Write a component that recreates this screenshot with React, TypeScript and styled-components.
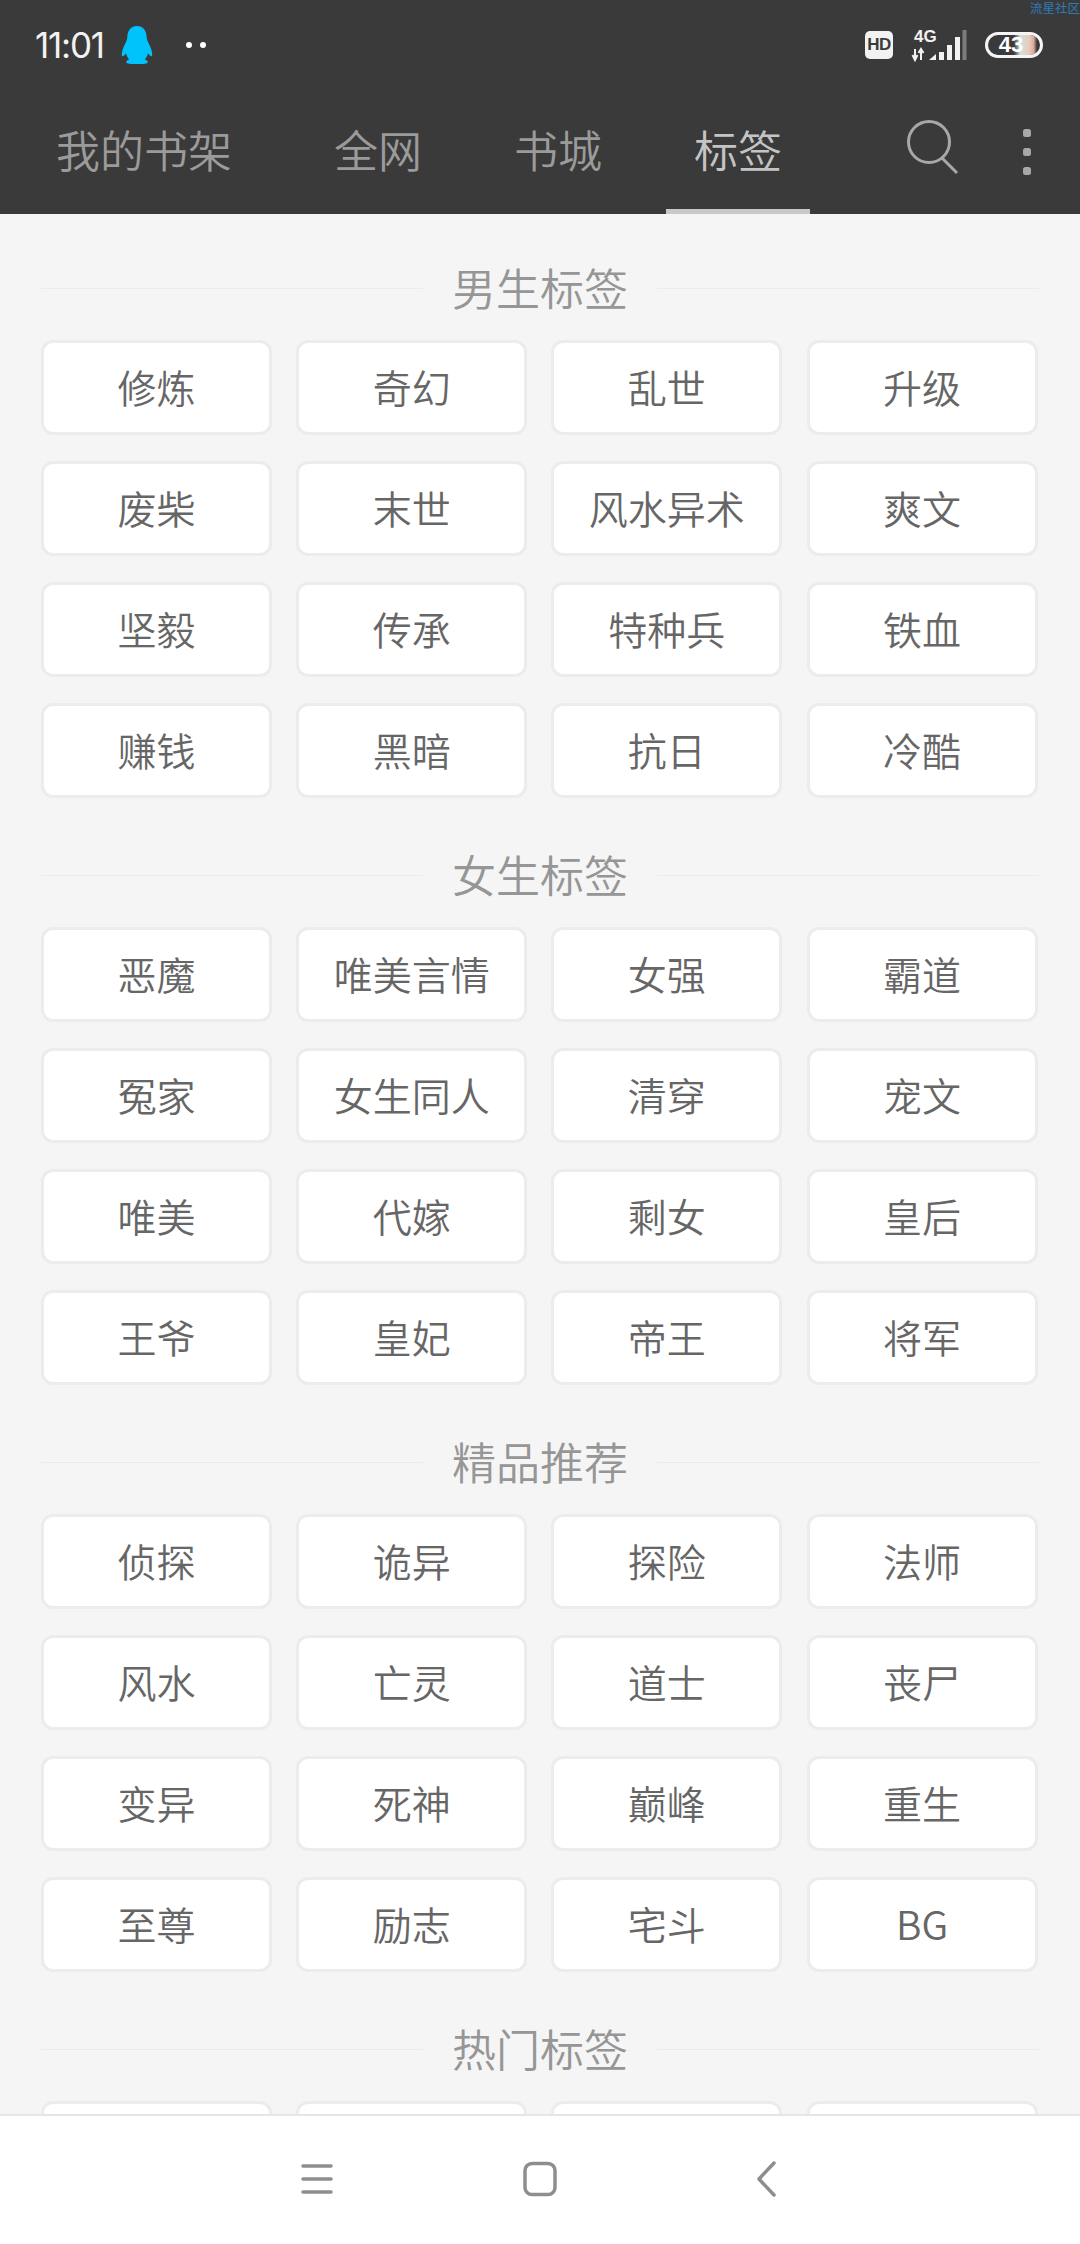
import React from "react";
import styled, { createGlobalStyle } from "styled-components";

const Global = createGlobalStyle`
  html, body { margin: 0; padding: 0; background: #f5f5f5; }
  body { font-family: "Noto Sans CJK SC", "Noto Sans", sans-serif; }
`;

const Screen = styled.div`
  width: 1080px;
  height: 2244px;
  display: flex;
  flex-direction: column;
  overflow: hidden;
  background: #f5f5f5;
`;

const Header = styled.header`
  flex: none;
  height: 214px;
  background: #3a3a3a;
  position: relative;
  display: flex;
  flex-direction: column;
`;

const Watermark = styled.span`
  position: absolute;
  top: 0;
  right: 0;
  font-size: 12.5px;
  line-height: 15px;
  color: #2f7ab8;
`;

const StatusBar = styled.div`
  flex: none;
  height: 90px;
  display: flex;
  align-items: center;
  padding: 0 37px 0 35px;
`;

const Time = styled.span`
  font-family: Inter, "Open Sans", sans-serif;
  font-size: 35px;
  line-height: 44px;
  letter-spacing: -1.2px;
  color: #f2f2f2;
`;

const Penguin = styled.svg`
  flex: none;
  width: 32px;
  height: 38px;
  margin-left: 17px;
`;

const StatusDots = styled.div`
  display: flex;
  gap: 8px;
  margin-left: 33px;
`;

const StatusDot = styled.i`
  width: 6px;
  height: 6px;
  border-radius: 50%;
  background: #fff;
`;

const StatusRight = styled.div`
  margin-left: auto;
  display: flex;
  align-items: center;
`;

const HdBadge = styled.span`
  width: 28px;
  height: 28px;
  border-radius: 5px;
  background: #f2f2f2;
  color: #3a3a3a;
  font-family: "Liberation Sans", sans-serif;
  font-weight: 700;
  font-size: 17px;
  letter-spacing: -0.5px;
  display: flex;
  align-items: center;
  justify-content: center;
`;

const Signal = styled.svg`
  width: 60px;
  height: 34px;
  margin-left: 18px;
`;

const Battery = styled.span`
  width: 58px;
  height: 26px;
  margin-left: 14px;
  box-sizing: border-box;
  border: 3px solid #f5f5f5;
  border-radius: 13px;
  background: linear-gradient(90deg, #3a3a3a 0 50%, #cfe3df 62%, #e8c9b8 80%, #d8a8a0 88%, #3a3a3a 94%);
  background-clip: padding-box;
  color: #fff;
  font-family: "Liberation Sans", sans-serif;
  font-weight: 700;
  font-size: 22px;
  line-height: 20px;
  text-align: center;
  padding-right: 6px;
`;

const Tabs = styled.nav`
  flex: 1;
  display: flex;
  align-items: stretch;
  gap: 36px;
  padding-left: 28px;
`;

const Tab = styled.div<{ $active?: boolean }>`
  flex: none;
  padding: 0 28px 1px;
  box-sizing: border-box;
  border-bottom: 5px solid ${(p) => (p.$active ? "#c8c8c8" : "transparent")};
  color: ${(p) => (p.$active ? "#c4c4c4" : "#9b9b9b")};
  font-size: 44px;
  font-weight: 350;
  display: flex;
  align-items: center;
  &:first-child { margin-right: 10px; }
`;

const SearchIcon = styled.svg`
  flex: none;
  align-self: flex-start;
  width: 56px;
  height: 60px;
  margin: 29px 0 0 59px;
`;

const MoreIcon = styled.svg`
  flex: none;
  align-self: flex-start;
  width: 12px;
  height: 48px;
  margin: 37px 0 0 24px;
`;

const Content = styled.main`
  flex: 1;
  min-height: 0;
  overflow: hidden;
  padding: 44px 41px 0;
`;

const Section = styled.section`
  margin-bottom: 47px;
`;

const TitleRow = styled.div`
  display: flex;
  align-items: center;
  height: 60px;
  margin-bottom: 22px;
`;

const TitleLine = styled.div`
  flex: 1;
  height: 1px;
  background: #ebebeb;
`;

const Title = styled.h2`
  margin: 0;
  padding: 0 29px 1px;
  font-size: 44px;
  font-weight: 350;
  line-height: 59px;
  color: #969696;
`;

const TagGrid = styled.div`
  display: grid;
  grid-template-columns: repeat(4, 231px);
  grid-auto-rows: 95px;
  column-gap: 24.2px;
  row-gap: 26px;
`;

const Tag = styled.div`
  box-sizing: border-box;
  border: 3px solid #ececec;
  border-radius: 12px;
  background: #fff;
  color: #666;
  font-size: 39px;
  font-weight: 350;
  padding-bottom: 4px;
  display: flex;
  align-items: center;
  justify-content: center;
`;

const BottomNav = styled.footer`
  flex: none;
  height: 130px;
  box-sizing: border-box;
  border-top: 2px solid #e6e6e6;
  background: #fff;
  display: flex;
  align-items: center;
  padding: 0 0 2px 299px;
  gap: 187px;
`;

const NavIcon = styled.svg`
  width: 36px;
  height: 36px;
  fill: none;
  stroke: #8e8e8e;
  stroke-width: 3.5;
  stroke-linecap: round;
  stroke-linejoin: round;
`;

const sections = [
  {
    title: "男生标签",
    tags: ["修炼", "奇幻", "乱世", "升级", "废柴", "末世", "风水异术", "爽文", "坚毅", "传承", "特种兵", "铁血", "赚钱", "黑暗", "抗日", "冷酷"],
  },
  {
    title: "女生标签",
    tags: ["恶魔", "唯美言情", "女强", "霸道", "冤家", "女生同人", "清穿", "宠文", "唯美", "代嫁", "剩女", "皇后", "王爷", "皇妃", "帝王", "将军"],
  },
  {
    title: "精品推荐",
    tags: ["侦探", "诡异", "探险", "法师", "风水", "亡灵", "道士", "丧尸", "变异", "死神", "巅峰", "重生", "至尊", "励志", "宅斗", "BG"],
  },
  { title: "热门标签", tags: ["", "", "", ""] },
];

export default function App() {
  return (
    <Screen>
      <Global />
      <Header>
        <Watermark>流星社区</Watermark>
        <StatusBar>
          <Time>11:01</Time>
          <Penguin viewBox="0 0 32 38">
            <path
              fill="#00c3fb"
              d="M16 0c-6 0-9.5 4.6-9.7 11-.1 2.400-.6 3.600-2 6.400C2 21.800.5 26 .8 29c.2 1.400 1 1.600 2 .8.8-.6 1.500-1.500 2.200-2.600.5 2.400 1.500 4.500 3.200 6.200-2 .7-3.200 1.700-3 2.900.2 1.200 2.200 1.700 5 1.700h11.600c2.800 0 4.800-.5 5-1.700.2-1.200-1-2.200-3-2.900 1.700-1.700 2.700-3.800 3.200-6.200.7 1.100 1.400 2 2.200 2.600 1 .8 1.800.6 2-.8.3-3-1.200-7.200-3.500-11.600-1.400-2.800-1.900-4-2-6.400C25.500 4.600 22 0 16 0z"
            />
          </Penguin>
          <StatusDots>
            <StatusDot />
            <StatusDot />
          </StatusDots>
          <StatusRight>
            <HdBadge>HD</HdBadge>
            <Signal viewBox="0 0 60 34">
              <text x="3" y="14" fontFamily="Liberation Sans, sans-serif" fontWeight="700" fontSize="17" fill="#f2f2f2">4G</text>
              <path d="M4 21v11M1.500 27 4 32l2.500-5M10 32V21M7.500 25 10 21l2.500 4" stroke="#f2f2f2" strokeWidth="2" fill="none" />
              <path d="M18 32l7-6v6zM28 24h5v8h-5zM36 17h5v15h-5zM44 9h5v23h-5z" fill="#f2f2f2" />
              <path d="M51.500 2h4v30h-4z" fill="#7d7d7d" />
            </Signal>
            <Battery>43</Battery>
          </StatusRight>
        </StatusBar>
        <Tabs>
          <Tab>我的书架</Tab>
          <Tab>全网</Tab>
          <Tab>书城</Tab>
          <Tab $active>标签</Tab>
          <SearchIcon viewBox="0 0 56 60" fill="none" stroke="#a8a8a8" strokeWidth="3">
            <circle cx="24" cy="23" r="20.500" />
            <path d="M37 39l15 15" />
          </SearchIcon>
          <MoreIcon viewBox="0 0 12 48" fill="#a8a8a8">
            <rect x="2" y="2" width="8" height="8" rx="2.500" />
            <rect x="2" y="21" width="8" height="8" rx="2.500" />
            <rect x="2" y="40" width="8" height="8" rx="2.500" />
          </MoreIcon>
        </Tabs>
      </Header>
      <Content>
        {sections.map((s) => (
          <Section key={s.title}>
            <TitleRow>
              <TitleLine />
              <Title>{s.title}</Title>
              <TitleLine />
            </TitleRow>
            <TagGrid>
              {s.tags.map((t, i) => (
                <Tag key={i}>{t}</Tag>
              ))}
            </TagGrid>
          </Section>
        ))}
      </Content>
      <BottomNav>
        <NavIcon viewBox="0 0 36 36">
          <path d="M4 5h28M4 18h28M4 31h28" />
        </NavIcon>
        <NavIcon viewBox="0 0 36 36">
          <rect x="3" y="2.500" width="30" height="31" rx="7" />
        </NavIcon>
        <NavIcon viewBox="0 0 36 36">
          <path d="M29 2 14 18l15 16" />
        </NavIcon>
      </BottomNav>
    </Screen>
  );
}
